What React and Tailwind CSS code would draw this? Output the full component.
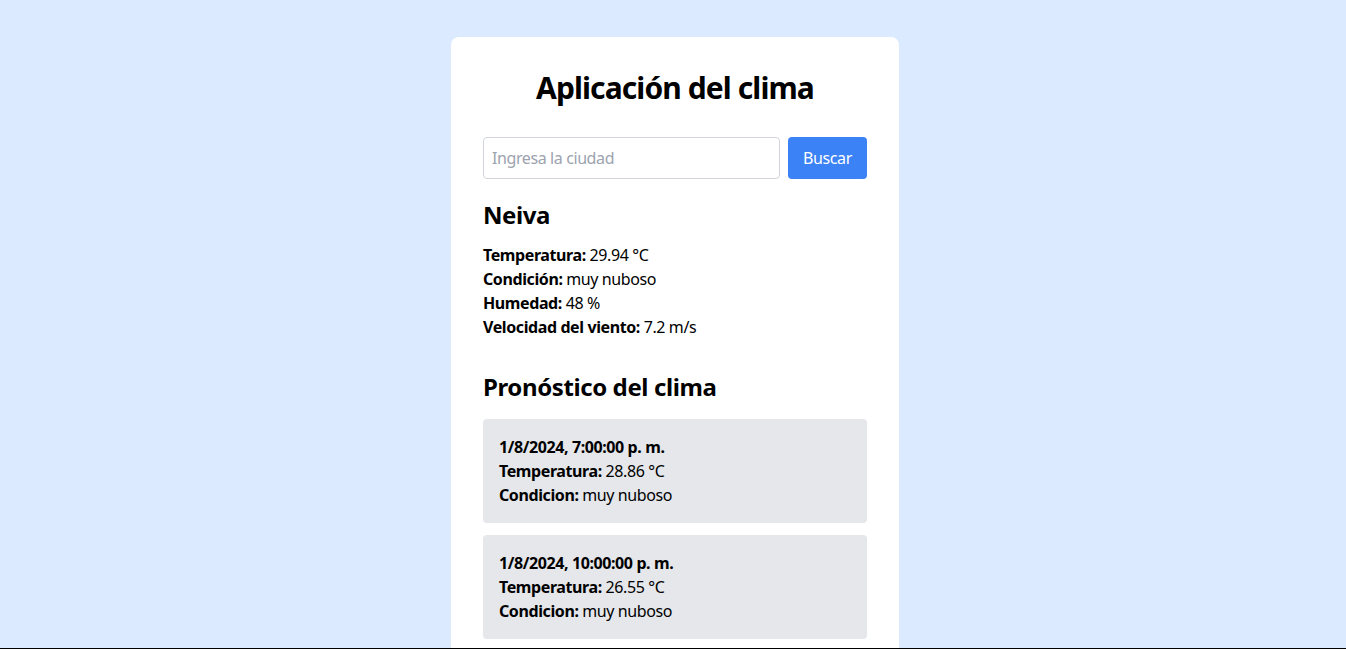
import React, { useState } from "react";

const current = {
  city: "Neiva",
  temp: "29.94",
  condition: "muy nuboso",
  humidity: 48,
  wind: 7.2,
};

const forecast = [
  { date: "1/8/2024, 7:00:00 p. m.", temp: "28.86", condition: "muy nuboso" },
  { date: "1/8/2024, 10:00:00 p. m.", temp: "26.55", condition: "muy nuboso" },
  { date: "2/8/2024, 1:00:00 a. m.", temp: "24.12", condition: "nubes dispersas" },
  { date: "2/8/2024, 4:00:00 a. m.", temp: "23.40", condition: "nubes dispersas" },
];

function App() {
  const [city, setCity] = useState("");

  return (
    <div
      className="min-h-screen bg-[#dbeafe] pt-[37px] pb-10 pl-1 tracking-tight text-black"
      style={{ fontFamily: '"Noto Sans", "Open Sans", sans-serif' }}
    >
      <div className="mx-auto w-[448px] rounded-lg bg-white p-8">
        <h1 className="mb-8 pt-[2px] text-center text-3xl leading-[34px] font-bold tracking-[-0.03em]">
          Aplicación del clima
        </h1>

        <form className="mb-5 flex gap-2" onSubmit={(e) => e.preventDefault()}>
          <input
            type="text"
            value={city}
            onChange={(e) => setCity(e.target.value)}
            placeholder="Ingresa la ciudad"
            className="h-[42px] flex-1 rounded border border-[#d1d5db] px-2 text-base tracking-tight placeholder:text-[#9ca3af] focus:outline-none"
          />
          <button type="submit" className="h-[42px] w-[79px] rounded bg-[#3b82f6] text-base tracking-tight text-white">
            Buscar
          </button>
        </form>

        <div>
          <h2 className="mb-3 text-2xl font-bold">{current.city}</h2>
          <p>
            <strong>Temperatura:</strong> {current.temp} °C
          </p>
          <p>
            <strong>Condición:</strong> {current.condition}
          </p>
          <p>
            <strong>Humedad:</strong> {current.humidity} %
          </p>
          <p>
            <strong>Velocidad del viento:</strong> {current.wind} m/s
          </p>
        </div>

        <div className="mt-8">
          <h2 className="mb-4 text-2xl font-bold">Pronóstico del clima</h2>
          <div className="flex flex-col gap-3">
            {forecast.map((item, index) => (
              <div key={index} className="rounded bg-[#e5e7eb] p-4">
                <p className="font-bold">{item.date}</p>
                <p>
                  <strong>Temperatura:</strong> {item.temp} °C
                </p>
                <p>
                  <strong>Condicion:</strong> {item.condition}
                </p>
              </div>
            ))}
          </div>
        </div>
      </div>
      <div className="fixed inset-x-0 bottom-0 h-px bg-black" />
    </div>
  );
}

export default App;
